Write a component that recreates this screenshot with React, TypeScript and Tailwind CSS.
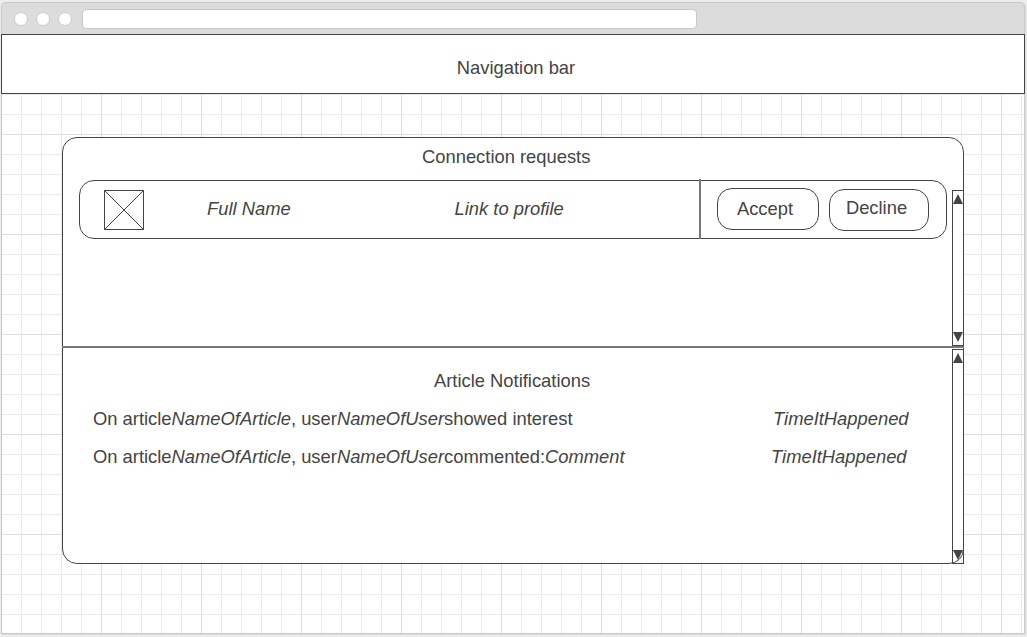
import type { ReactNode } from "react";

function TitleBar() {
  return (
    <header className="mx-px flex h-[31px] shrink-0 items-center rounded-t-[4px] bg-[#dcdcdc] pl-3 pt-px">
      <div className="flex gap-2">
        {[0, 1, 2].map((dot) => (
          <span key={dot} className="size-[14px] rounded-full border border-[#cbcbcb] bg-white" />
        ))}
      </div>
      <div className="ml-[10px] h-5 w-[615px] rounded-[4px] border border-[#c8c8c8] bg-white" />
    </header>
  );
}

function Scrollbar({ height, className }: { height: number; className: string }) {
  return (
    <svg width="12" height={height} className={`absolute right-[-1px] ${className}`}>
      <rect x="0.5" y="0.5" width="11" height={height - 1} fill="none" stroke="#444" />
      <path d="M6 4 L11 14 H1 Z" fill="#444" />
      <path d={`M1 ${height - 14} H11 L6 ${height - 4} Z`} fill="#444" />
    </svg>
  );
}

function PicturePlaceholder() {
  return (
    <svg width="40" height="40" className="ml-6 mt-[9px] shrink-0">
      <path d="M0.5 0.5 H39.5 V39.5 H0.5 Z M0.5 0.5 L39.5 39.5 M39.5 0.5 L0.5 39.5" fill="none" stroke="#444" />
    </svg>
  );
}

function ConnectionRequest() {
  return (
    <div className="ml-4 mt-3 flex h-[59px] w-[868px] rounded-[15px] border border-[#444]">
      <PicturePlaceholder />
      <em className="ml-[63px] mt-[17px] w-[247.5px]">Full Name</em>
      <em className="mt-[17px] w-[244.5px]">Link to profile</em>
      <div className="mt-[-2px] h-[60px] w-[2px] shrink-0 bg-[#777]" />
      <button className="ml-4 mt-[7px] h-[42px] w-[102px] shrink-0 rounded-[15px] border border-[#444] pr-[6px]">
        Accept
      </button>
      <button className="ml-[10px] mt-2 h-[42px] w-[100px] shrink-0 rounded-[15px] border border-[#444] pb-[4px] pr-[5px]">
        Decline
      </button>
    </div>
  );
}

function Notification({ children, timeWidth }: { children: ReactNode; timeWidth: string }) {
  return (
    <li className="flex h-[38px] justify-between pl-[30px]">
      <p>{children}</p>
      <em className={timeWidth}>TimeItHappened</em>
    </li>
  );
}

export default function App() {
  return (
    <div className="h-[637px] w-[1027px] overflow-hidden bg-[#ececec] pl-px pt-[2px] font-['Liberation_Sans',Arial,sans-serif] text-[18.36px] leading-[22px] text-[#444]">
      <div className="flex h-[632px] w-[1024px] flex-col rounded-t-[5px] border-t border-[#c8c8c8] bg-[#c8c8c8] shadow-[1px_1px_1px_#dddddd]">
        <TitleBar />
        <nav className="flex h-[60px] shrink-0 items-center justify-center border border-[#444] bg-white pl-[6px] pt-[7px]">
          <span>Navigation bar</span>
        </nav>
        <main className="h-[540px] border-x border-b border-[#c8c8c8] bg-white bg-[linear-gradient(to_right,#dedede_1px,transparent_1px),linear-gradient(to_bottom,#dedede_1px,transparent_1px),linear-gradient(to_right,#ebebeb_1px,transparent_1px),linear-gradient(to_bottom,#ebebeb_1px,transparent_1px)] bg-[length:100px_100px,100px_100px,20px_20px,20px_20px] bg-[position:-1px_0px,0px_40px,-1px_0px,0px_0px] pl-[60px] pt-[43px]">
          <div className="relative h-[427px] w-[902px] rounded-[15px] border border-[#444] bg-white">
            <section className="h-[208px] pt-[8px]">
              <h2 className="pl-[359px]">Connection requests</h2>
              <ConnectionRequest />
            </section>
            <div className="mx-[-1px] h-[2px] bg-[#777]" />
            <section className="pt-[22px]">
              <h2 className="pl-[371px]">Article Notifications</h2>
              <ul className="mt-4">
                <Notification timeWidth="w-[190px]">
                  On article<em>NameOfArticle</em>, user<em>NameOfUser</em>showed interest
                </Notification>
                <Notification timeWidth="w-[192px]">
                  On article<em>NameOfArticle</em>, user<em>NameOfUser</em>commented:<em>Comment</em>
                </Notification>
              </ul>
            </section>
            <Scrollbar height={156} className="top-[52px]" />
            <Scrollbar height={215} className="top-[211px]" />
          </div>
        </main>
      </div>
    </div>
  );
}
